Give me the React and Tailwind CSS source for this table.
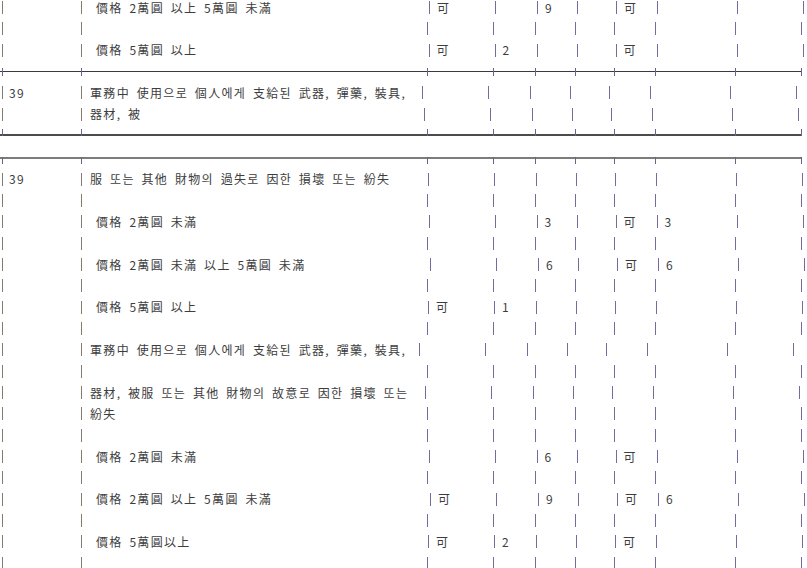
const COLS = ["w-[66px]", "w-[42px]", "w-[40px]", "w-[39px]", "w-[41px]", "w-[80px]", "w-[66px]"];

const T1 = [
  { label: "價格 2萬圓 以上 5萬圓 未滿", indent: true, cells: ["可", "", "9", "", "可"], dx: 2 },
  {},
  { label: "價格 5萬圓 以上", indent: true, cells: ["可", "2", "", "", "可"], dx: 1.5 },
  { rule: "cross" },
  { no: "39", label: "軍務中 使用으로 個人에게 支給된 武器, 彈藥, 裝具,", dx: -5.5 },
  { label: "器材, 被", dx: -3 },
  { rule: "bottom" },
];

const T2 = [
  { rule: "top" },
  { no: "39", label: "服 또는 其他 財物의 過失로 因한 損壞 또는 紛失", dx: 1 },
  {},
  { label: "價格 2萬圓 未滿", indent: true, cells: ["", "", "3", "", "可", "3"], dx: 1.5 },
  {},
  { label: "價格 2萬圓 未滿 以上 5萬圓 未滿", indent: true, cells: ["", "", "6", "", "可", "6"], dx: 3 },
  {},
  { label: "價格 5萬圓 以上", indent: true, cells: ["可", "1"], dx: 1 },
  {},
  { label: "軍務中 使用으로 個人에게 支給된 武器, 彈藥, 裝具,", dx: -8 },
  {},
  { label: "器材, 被服 또는 其他 財物의 故意로 因한 損壞 또는", dx: -2.5 },
  { label: "紛失" },
  {},
  { label: "價格 2萬圓 未滿", indent: true, cells: ["", "", "6", "", "可"], dx: 1.5 },
  {},
  { label: "價格 2萬圓 以上 5萬圓 未滿", indent: true, cells: ["可", "", "9", "", "可", "6"], dx: 3 },
  {},
  { label: "價格 5萬圓以上", indent: true, cells: ["可", "2", "", "", "可"], dx: 1 },
  {},
];

function Pipe({ left }) {
  return <span className={left ? "inline-block h-[13px] w-px shrink-0 bg-[#857a6e]" : "inline-block h-[13px] w-px shrink-0 bg-[#7a68a0]"} />;
}

function Line({ no, label, indent, cells = [], dx = 0 }) {
  return (
    <div className="flex h-[21.33px] items-center whitespace-nowrap">
      <div className="flex w-[81px] shrink-0 items-center pl-[2px]">
        <Pipe left />
        {no && <span className="ml-[6px]">{no}</span>}
      </div>
      <div className="flex shrink-0 items-center" style={{ width: 346 + dx }}>
        <Pipe left />
        {label && <span className={indent ? "ml-[14px]" : "ml-[8px]"}>{label}</span>}
      </div>
      {COLS.map((w, i) => (
        <div key={i} className={`flex shrink-0 items-center ${w}`}>
          <Pipe />
          {cells[i] && <span className="ml-[7px]">{cells[i]}</span>}
        </div>
      ))}
      <Pipe />
    </div>
  );
}

function Rule({ kind }) {
  const row = kind === "cross" ? "h-[21.33px] pt-[7px]" : kind === "bottom" ? "h-[21.33px] pt-[4px]" : "h-[21.33px] pt-[10px]";
  const align = kind === "cross" ? "items-center" : kind === "bottom" ? "items-end" : "items-start";
  const line = kind === "cross" ? "h-px bg-[#3a3a3a]" : kind === "bottom" ? "h-[2px] bg-[#4c4c4c]" : "h-[2px] bg-[#7c7c7c]";
  const tick = kind === "cross" ? "h-[8px] w-px shrink-0 bg-[#6f6288]" : "h-[7px] w-px shrink-0 bg-[#6f6288]";
  return (
    <div className={row}>
      <div className={`flex w-[802px] ${align}`}>
        <div className={`flex w-[81px] shrink-0 ${align}`}>
          <span className={`w-[2px] ${line}`} />
          <span className={tick} />
          <span className={`flex-1 ${line}`} />
        </div>
        <div className={`flex w-[346px] shrink-0 ${align}`}>
          <span className={tick} />
          <span className={`flex-1 ${line}`} />
        </div>
        {COLS.map((w, i) => (
          <div key={i} className={`flex shrink-0 ${w} ${align}`}>
            <span className={tick} />
            <span className={`flex-1 ${line}`} />
          </div>
        ))}
        <span className={tick} />
      </div>
    </div>
  );
}

function Block({ rows }) {
  return (
    <div>
      {rows.map((r, i) => (r.rule ? <Rule key={i} kind={r.rule} /> : <Line key={i} {...r} />))}
    </div>
  );
}

export default function App() {
  return (
    <div className="h-screen overflow-hidden bg-white font-['Noto_Sans_CJK_KR',sans-serif] text-[12px] tracking-[1.33px] text-[#3d3d3d] [word-spacing:2.7px]">
      <div className="-mt-[3px] flex flex-col gap-[1px]">
        <Block rows={T1} />
        <Block rows={T2} />
      </div>
    </div>
  );
}
